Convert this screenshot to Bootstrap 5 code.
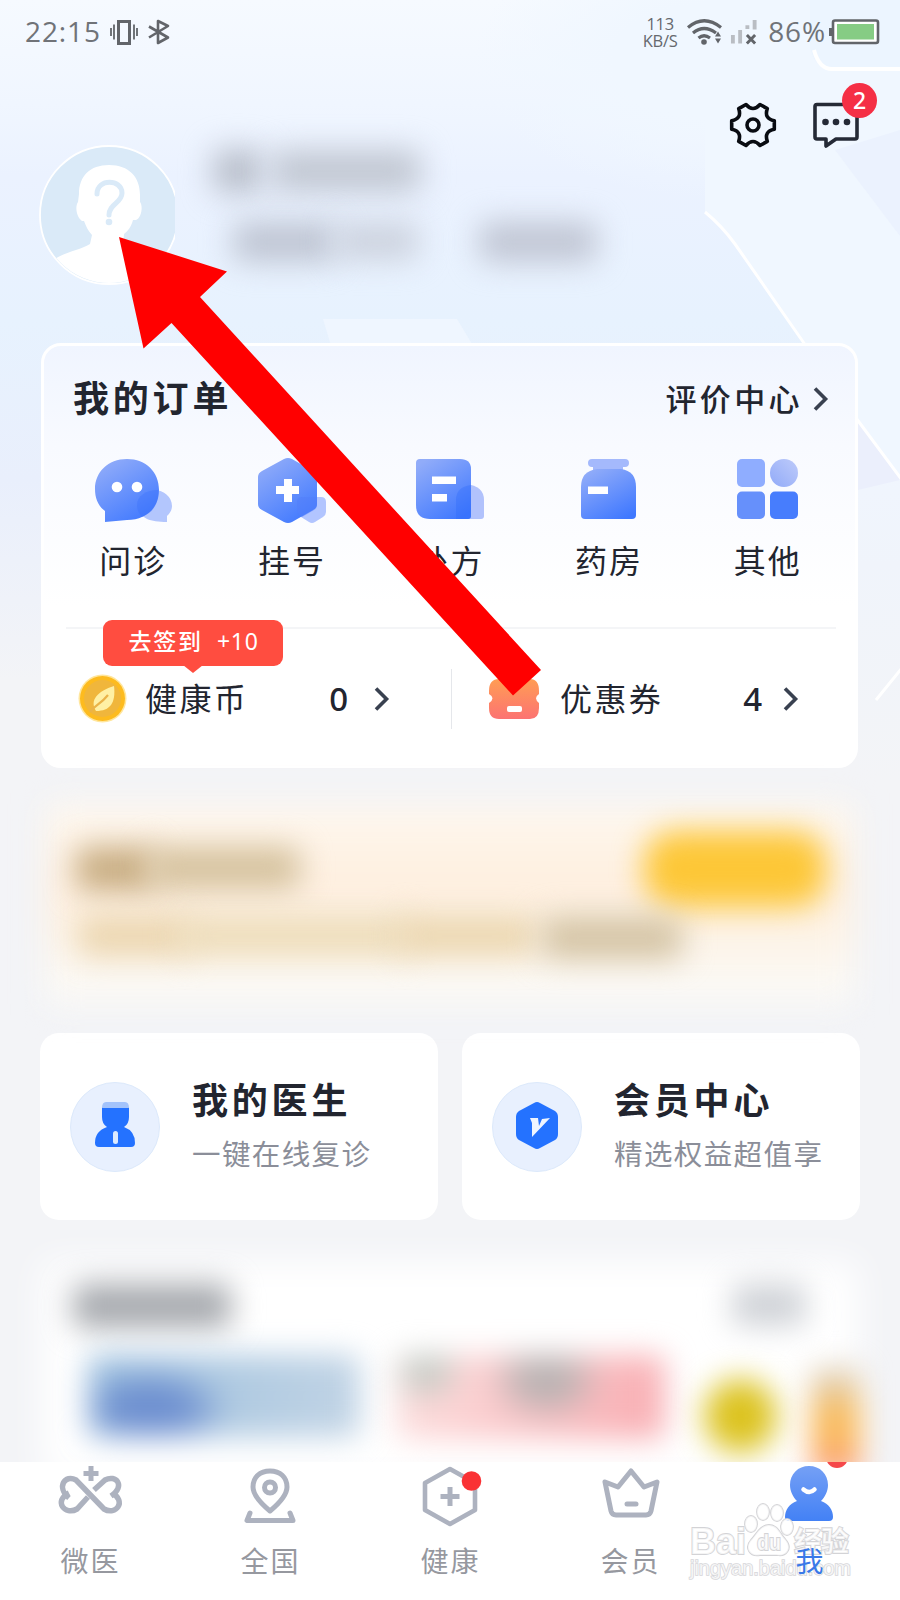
<!DOCTYPE html>
<html lang="zh-CN">
<head>
<meta charset="utf-8">
<meta name="viewport" content="width=device-width, initial-scale=1">
<title>我的</title>
<link href="https://cdn.jsdelivr.net/npm/bootstrap@5.3.0/dist/css/bootstrap.min.css" rel="stylesheet">
<style>
body{background:#f3f4f7;color:#22252f;font-family:"Noto Sans","Noto Sans CJK SC",sans-serif;overflow-x:hidden}
svg{display:block;flex:none;overflow:visible}
.screen{width:900px;height:1600px;overflow:hidden}
.backdrop{top:0;left:0;z-index:0}
.status{height:63px;padding:0 20px 0 25px;color:#707378;font-family:"Open Sans",sans-serif;font-size:28px;line-height:63px}
.clock{letter-spacing:.9px;width:84px}
.rate{font-size:16.5px;line-height:17px;text-align:center;width:36px;color:#66696e;letter-spacing:-.3px}
.rate div{height:17px}
.profile{height:280px;padding:32px 19px 0 39px}
.avatar{margin-top:49px}
.names{padding:54px 0 0 34px;width:500px}
.smudge{filter:blur(15px);border-radius:10px}
.tools{padding-top:6px;gap:35px}
.dot2{top:-18px;left:30px;width:35px;height:35px;background:#f52f45;color:#fff;font-size:23px;line-height:34px;font-weight:500;text-align:center}
.orders{margin:0 42px 0 41px;height:425px;border:3px solid #fff;border-radius:20px;background:linear-gradient(#f0f5ff 0,#f8faff 100px,#fff 260px)}
.big-title{font-size:36px;line-height:40px;font-weight:700;letter-spacing:3.8px}
.orders-head{padding:33px 26px 0 29px;height:107px}
.review{font-size:31px;line-height:40px;letter-spacing:3.4px;font-weight:500}
.kinds{padding:0 8px 0 10px;height:174px}
.kinds span{font-size:32px;line-height:40px;letter-spacing:2px;margin-top:16px}
.assets{margin:0 19px 0 22px;border-top:2px solid #f4f5f7;height:140px;padding-top:40px}
.asset{height:60px;font-size:32px;letter-spacing:2.4px}
.asset b{font-family:"Noto Sans";font-size:33px;font-weight:500;letter-spacing:0}
.asset+.asset{border-left:1px solid #e5e7eb}
.bubble{left:36.5px;top:-9px;width:180px;height:46px;background:#ff4d40;color:#fff;border-radius:9px;font-size:23px;line-height:43px;letter-spacing:1.8px;padding-left:26px;font-weight:500}
.bubble i{font-style:normal;font-weight:400;margin-left:14px;letter-spacing:.8px}
.bubble svg{left:80px;top:45px}
.promo{height:265px;padding:28px 40px 0}
.promo-in{height:222px}
.promo-bg{inset:8px 6px 14px 6px;background:linear-gradient(#fef8ef,#feefdf 40%,#fdf2e4 62%,#fbf9f5 90%);filter:blur(16px)}
.duo{padding:0 40px;gap:24px;height:187px}
.tile{border-radius:19px;background:#fff;padding:49px 0 0 30px;width:398px}
.disc{width:90px;height:90px;background:#e8f0fe;border:1px solid #dce9fb}
.tile-text{padding-left:32px;margin-top:-1px}
.sub{font-size:28.5px;line-height:36px;color:#8b8e99;letter-spacing:1.4px;margin-top:15px;white-space:nowrap}
.recent{height:242px;padding:30px 40px 0;overflow:hidden}
.recent-bg{inset:42px 42px -20px;background:#fff;filter:blur(18px)}
.tabs{height:138px;background:#fff;z-index:2}
.tab-cell{width:180px;height:138px;font-size:28px;color:#96989f;letter-spacing:2px}
.tab-cell svg{height:70px;margin:4px 0 0 2px}
.tab-cell span{line-height:34px;margin:8px 0 0 1px;z-index:3;position:relative}
.tab-cell.now{color:#3a79e8}
.tab-cell.now svg{margin-left:0}
.pip{width:22px;height:22px;background:#f5484a;left:826px;top:-16px}
.tabs-clip{top:0;left:0;width:900px;height:20px;overflow:hidden}
.stamp{right:45px;top:38px;z-index:2}
.pointer{left:0;top:0;z-index:5;pointer-events:none}
</style>
</head>
<body>
<main class="screen position-relative">
<svg class="backdrop position-absolute" width="900" height="800" viewBox="0 0 900 800">
<defs>
<linearGradient id="sky" x2="0" y2="1"><stop offset="0" stop-color="#f6faff"/><stop offset=".13" stop-color="#f0f6ff"/><stop offset=".22" stop-color="#ebf2ff"/><stop offset=".4" stop-color="#e7f2fe"/><stop offset=".6" stop-color="#e9effc"/><stop offset=".85" stop-color="#f3f4f7"/></linearGradient>
<linearGradient id="veil" x2="0" y2="1"><stop offset="0" stop-color="#f0f6ff"/><stop offset=".4" stop-color="#f0f4fb"/><stop offset="1" stop-color="#f3f4f7"/></linearGradient>
<radialGradient id="haze" gradientUnits="userSpaceOnUse" cx="705" cy="60" r="230" gradientTransform="translate(0 24) scale(1 .6)"><stop stop-color="#f0f7ff"/><stop offset=".4" stop-color="#f0f7ff"/><stop offset="1" stop-color="#f0f7ff" stop-opacity="0"/></radialGradient>
</defs>
<path fill="url(#sky)" d="M0 0h900v800H0z"/>
<path fill="url(#haze)" d="M460 0H705V212H460z"/>
<path fill="#f0f7ff" d="M705 0H900V480L803 343L735 246Q722 226 705 212z"/>
<path fill="#ebf2fe" d="M835 150L900 236V130z"/>
<path fill="#eff6ff" d="M323 319h134l18 30H332z"/>
<path fill="url(#veil)" d="M858 420L900 478V780H858z"/>
<path fill="#ebeffc" d="M858 422L900 480L858 490z"/>
<path fill="#ecf5ff" d="M810 0h90v69h-72q-11 0-18-20z"/>
<g fill="none" stroke="#fff" stroke-width="4"><path d="M814 50q5 19 18 19h68"/><path stroke-width="3" d="M705 212Q722 226 735 244L806 346M856 418L902 480M876 700L902 668"/></g>
</svg>

<div class="status position-relative d-flex align-items-center">
<span class="clock">22:15</span>
<svg width="60" height="28" viewBox="0 0 60 28" fill="none" stroke="#62656a"><path stroke-width="3" d="M9.500 3.500h11v22h-11z"/><path stroke-width="1.800" d="M2 10v8M5 6.500v15M25 6.500v15M28 10v8"/><path stroke-width="2.600" stroke-linejoin="round" d="M40 8.500L59 19.500L49 25V3L59 8L40 19.500"/></svg>
<div class="rate ms-auto"><div>113</div><div>KB/S</div></div>
<svg style="margin-left:8px" width="36" height="28" viewBox="0 0 36 28" fill="none" stroke="#62656a" stroke-width="3.200"><path d="M2 9.500Q18-4 35 9.500M7 15Q18 6 30 15M12.500 20Q18 15.500 24 20"/><circle cx="18" cy="24" r="2.800" fill="#62656a" stroke="none"/><path fill="#62656a" stroke="none" d="M29 18.500l3-5 3 5zM29 20.500h6l-3 5z"/></svg>
<svg style="margin-left:8px" width="28" height="28" viewBox="0 0 29 28"><path fill="#b9bdc3" d="M1 17h4v9H1zM8.500 12h4v14h-4zM16 7h4v4h-4zM23.500 1.500h4v10h-4z"/><path stroke="#62656a" stroke-width="3" d="M17.500 17l8.500 9M26 17l-8.500 9"/></svg>
<span style="margin-left:10px;letter-spacing:.9px">86%</span>
<svg style="margin-left:3px" width="51" height="26" viewBox="0 0 51 26"><rect x="4" y="1.500" width="45" height="22.500" rx="2" fill="#fff" stroke="#62656a" stroke-width="2.600"/><path fill="#62656a" d="M0 9h4v8H0z"/><path fill="#86cc84" d="M8 5h37v15.500H8z"/></svg>
</div>

<header class="profile position-relative d-flex align-items-start">
<svg class="avatar" width="140" height="142" viewBox="0 0 140 142"><defs><clipPath id="round"><circle cx="70" cy="71" r="68"/></clipPath><clipPath id="edge"><path d="M0 0h136v142H0z"/></clipPath></defs><g clip-path="url(#edge)"><circle cx="70" cy="71" r="69" fill="#daeaf8"/><g clip-path="url(#round)" fill="#fff"><path d="M70 21c20 0 31 12 31 30v7c3 3 2 16-4 18h-3c-2 7-5 11-9 14l-1 13c15 8 31 8 38 17l-15 35H18L14 116c12-8 27-10 37-16l2-9c-4-4-6-9-8-14h-2c-6-4-7-15-4-19l1-8c0-18 11-29 30-29z"/></g><path d="M58 50c0-16 25-15 25-1 0 10-13 11-13 22" fill="none" stroke="#daeaf8" stroke-width="5" stroke-linecap="round"/><circle cx="70" cy="78" r="3.300" fill="#daeaf8"/><circle cx="70" cy="71" r="69" fill="none" stroke="#fff" stroke-width="1.800"/></g></svg>
<div class="names">
<div class="d-flex"><div class="smudge" style="width:50px;height:44px;background:#b9bfcb"></div><div class="smudge" style="width:150px;height:42px;margin:1px 0 0 8px;background:#c1c7d2"></div></div>
<div class="d-flex" style="margin-top:29px"><div class="smudge" style="width:104px;height:40px;margin-left:20px;background:#bec4d2"></div><div class="smudge" style="width:84px;height:38px;margin-left:-2px;background:#ccd2de"></div><div class="smudge" style="width:118px;height:40px;margin-left:60px;background:#c0c5d3"></div></div>
</div>
<div class="tools d-flex ms-auto">
<svg width="48" height="48" viewBox="-24 -24 48 48" fill="none" stroke="#090c12" stroke-width="3.600" stroke-linejoin="round"><path d="M-7-20.500Q0-12.500 7-20.500L14.300-16.400Q10.800-6.250 21.300-4.300V4.300Q10.800 6.250 14.300 16.400L7 20.500Q0 12.500-7 20.500L-14.300 16.400Q-10.800 6.250-21.300 4.300V-4.300Q-10.800-6.250-14.300-16.400z"/><circle r="6"/></svg>
<div class="position-relative"><svg width="69" height="50" viewBox="0 0 69 50"><path d="M5 3.500h38q2 0 2 2V36q0 2-2 2H24l-10 7v-7H5q-2 0-2-2V5.500q0-2 2-2z" fill="none" stroke="#252a36" stroke-width="3.600" stroke-linejoin="round"/><g fill="#252a36"><circle cx="13.500" cy="21" r="3.300"/><circle cx="24" cy="21" r="3.300"/><circle cx="35" cy="21" r="3.300"/></g></svg><span class="dot2 position-absolute rounded-circle">2</span></div>
</div>
</header>

<section class="orders position-relative">
<div class="orders-head d-flex justify-content-between align-items-start">
<div class="big-title">我的订单</div>
<div class="review d-flex align-items-center">评价中心<svg style="margin-left:9px" width="17" height="26" viewBox="0 0 17 26" fill="none" stroke="#394150" stroke-width="3.600"><path d="M3 2.500l10.500 10.500L3 23.500"/></svg></div>
</div>
<svg width="0" height="0" class="position-absolute"><defs><linearGradient id="blue" x1=".2" y1="0" x2=".8" y2="1"><stop offset="0" stop-color="#91acf9"/><stop offset="1" stop-color="#3f78ff"/></linearGradient><linearGradient id="pale" x1="1" x2="0" y2="1"><stop offset="0" stop-color="#becbfa"/><stop offset="1" stop-color="#91aaf8"/></linearGradient></defs></svg>
<div class="kinds row g-0">
<div class="col d-flex flex-column align-items-center"><svg width="80" height="72" viewBox="0 0 80 72"><path fill="#b3c6fd" d="M61 37c10 0 18 7 18 16 0 4-2 7-5 10v6c-18 0-28-4-28-16 0-9 6-16 15-16z"/><path fill="url(#blue)" d="M34 6c19 0 32 13 32 31S53 67 34 67l-22 2V58C5 53 2 45 2 36 2 19 15 6 34 6z"/><path fill="#3971fa" opacity=".35" d="M65 37c-12 0-21 6-21 15 0 5 2 9 5 12 10-4 17-12 16-27z"/><circle cx="24" cy="34" r="5.300" fill="#fff"/><circle cx="44" cy="34" r="5.300" fill="#fff"/></svg><span>问诊</span></div>
<div class="col d-flex flex-column align-items-center"><svg width="74" height="72" viewBox="0 0 74 72"><path fill="#b2c5ff" d="M46 44h20q5 0 5 5v10q0 3-3 5l-8 5q-3 2-6 0l-8-5z"/><path fill="url(#blue)" d="M29 6q4-2 8 0l21 12q4 2 4 6v27q0 4-4 6L37 69q-4 2-8 0L7 57q-4-2-4-6V24q0-4 4-6z"/><path fill="#fff" d="M29 26h8v7h7v8h-7v8h-8v-8h-8v-8h8z"/><path fill="#517efa" opacity=".5" d="M42 49q0-5 5-5h15v8q0 3-3 5l-12 7q-5-3-5-7z"/></svg><span>挂号</span></div>
<div class="col d-flex flex-column align-items-center"><svg width="86" height="72" viewBox="0 0 86 72"><g transform="translate(1)"><path fill="#b1c2fc" d="M58 31q18 2 18 16v16q0 3-3 3H58z"/><path fill="url(#blue)" d="M12 6h40q11 0 11 10v47q0 3-3 3H22Q8 66 8 52V10q0-4 4-4z"/><path fill="#2f69fa" opacity=".35" d="M63 32q-15 2-15 15v19h12q3 0 3-3z"/><path fill="#fff" d="M24 23.500h24v7.500H24zM24 41h15v7.500H24z"/></g></svg><span>处方</span></div>
<div class="col d-flex flex-column align-items-center"><svg width="60" height="72" viewBox="0 0 60 72"><path fill="#a4b9fc" d="M13 6h33q4 0 4 4t-4 4h-2v7H14v-7h-1q-4 0-4-4t4-4z"/><path fill="url(#blue)" d="M18 16h24q15 2 15 18v28q0 4-4 4H6q-4 0-4-4V34q0-16 16-18z"/><path fill="#fff" d="M9 33.500h20V41H9z"/></svg><span>药房</span></div>
<div class="col d-flex flex-column align-items-center"><svg width="62" height="72" viewBox="0 0 62 72"><rect x="0" y="6" width="28" height="28" rx="5" fill="#8fadff"/><circle cx="47" cy="20" r="14" fill="url(#pale)"/><rect x="0" y="38.500" width="28" height="27.500" rx="5" fill="#6690fb"/><rect x="33" y="38.500" width="28" height="27.500" rx="5" fill="#477dfd"/></svg><span>其他</span></div>
</div>
<div class="assets d-flex position-relative">
<div class="asset d-flex align-items-center" style="width:385px;padding-left:11px"><svg width="50" height="50" viewBox="0 0 50 50"><circle cx="25.500" cy="24.500" r="24" fill="#ffe69d"/><circle cx="25.500" cy="24.500" r="22.500" fill="#fdbb1f"/><circle cx="25.500" cy="24.500" r="18.500" fill="#f0b63c"/><path fill="#fff0a4" d="M37 12c2 17-4 25-18 25-7-11 2-20 18-25z"/><path d="M13 38c5-7 10-7 18-17" fill="none" stroke="#eab349" stroke-width="2.200"/></svg><span style="margin-left:18px">健康币</span><b style="margin-left:81px">0</b><svg style="margin-left:25px" width="17" height="26" viewBox="0 0 17 26" fill="none" stroke="#394150" stroke-width="3.600"><path d="M3 2.500l10.500 10.500L3 23.500"/></svg></div>
<div class="asset d-flex align-items-center flex-fill" style="padding-left:37px"><svg width="51" height="42" viewBox="0 0 51 42"><defs><linearGradient id="tick" x2="0" y2="1"><stop stop-color="#ff9d54"/><stop offset="1" stop-color="#fc7372"/></linearGradient></defs><path fill="url(#tick)" d="M10 1h31q9 0 9 12v3q-6 4 0 9v5q0 11-9 11H10Q0 41 0 30v-5q7-5 0-9v-3Q0 1 10 1z"/><rect x="18" y="28" width="15" height="6" rx="2" fill="#fff"/></svg><span style="margin-left:20px">优惠券</span><b style="margin-left:80px">4</b><svg style="margin-left:20px" width="17" height="26" viewBox="0 0 17 26" fill="none" stroke="#394150" stroke-width="3.600"><path d="M3 2.500l10.500 10.500L3 23.500"/></svg></div>
<div class="bubble position-absolute">去签到<i>+10</i><svg class="position-absolute" width="20" height="8"><path fill="#ff4d40" d="M0 0h20l-10 8z"/></svg></div>
</div>
</section>

<section class="promo position-relative">
<div class="promo-in position-relative">
<div class="promo-bg position-absolute"></div>
<div class="position-relative d-flex" style="padding:51px 34px 0 36px"><div class="smudge" style="width:80px;height:44px;background:#c8ad82"></div><div class="smudge" style="width:152px;height:42px;margin-left:-8px;background:#d5c29e"></div><div class="smudge ms-auto" style="width:182px;height:76px;margin-top:-16px;border-radius:32px;background:#fdc737"></div></div>
<div class="position-relative d-flex" style="padding:10px 0 0 38px"><div class="smudge" style="width:114px;height:38px;background:#ebd5ae"></div><div class="smudge" style="width:234px;height:38px;margin-left:-14px;background:#eddcb9"></div><div class="smudge" style="width:138px;height:38px;margin-left:-14px;background:#ebd6af"></div><div class="smudge" style="width:140px;height:42px;margin-left:6px;background:#d4c4a5"></div></div>
</div>
</section>

<section class="duo d-flex">
<div class="tile d-flex align-items-start"><div class="disc rounded-circle d-flex align-items-center justify-content-center"><svg width="42" height="48" viewBox="0 0 42 48" style="margin-top:-6px"><path fill="#2472ff" d="M8 7h27v10q0 7-5 10 11 4 11 16 0 4-4 4H5q-4 0-4-4 0-12 12-16-5-3-5-10z"/><path fill="#a3c3fb" d="M12 2h19q4 0 4 6H8q0-6 4-6z"/><rect x="19" y="31" width="5" height="13" rx="2.500" fill="#dceaff"/></svg></div><div class="tile-text"><div class="big-title">我的医生</div><div class="sub">一键在线复诊</div></div></div>
<div class="tile d-flex align-items-start"><div class="disc rounded-circle d-flex align-items-center justify-content-center"><svg width="44" height="48" viewBox="0 0 44 48" style="margin-top:-5px"><path fill="#2472ff" d="M19 2q3-2 6 0l15 8q3 2 3 6v17q0 4-3 6l-15 8q-3 2-6 0L4 39q-3-2-3-6V16q0-4 3-6z"/><path fill="#eff5ff" d="M15 17h8l1 8 3-7 8-1-18 19v-14z"/></svg></div><div class="tile-text"><div class="big-title">会员中心</div><div class="sub">精选权益超值享</div></div></div>
</section>

<section class="recent position-relative">
<div class="recent-bg position-absolute"></div>
<div class="position-relative d-flex justify-content-between" style="padding:34px 54px 0 33px"><div class="smudge" style="width:158px;height:44px;background:#a6a9ae"></div><div class="smudge" style="width:74px;height:42px;background:#cfd2d7"></div></div>
<div class="position-relative d-flex" style="padding:27px 0 0 48px"><div class="smudge" style="width:276px;height:82px;background:radial-gradient(ellipse 80px 42px at 62px 54px,#6d8fd0 45%,transparent),linear-gradient(100deg,#9cc0de,#c2d4e5)"></div><div class="smudge" style="width:272px;height:84px;margin-left:36px;background:radial-gradient(ellipse 60px 44px at 150px 24px,#b8b2b2 35%,transparent),radial-gradient(ellipse 40px 36px at 30px 14px,#c5cbc5 35%,transparent),linear-gradient(100deg,#fce0df,#fbc3c6 55%,#f8adb2)"></div><div class="smudge rounded-circle" style="width:74px;height:74px;margin:24px 0 0 39px;background:#dcc31f"></div><div class="smudge" style="width:50px;height:110px;margin:12px 0 0 34px;background:linear-gradient(#dad6cf,#f9b955 45%,#fab75e 70%,#fa8c7c)"></div></div>
</section>

<nav class="tabs position-relative d-flex">
<div class="tabs-clip position-absolute"><span class="pip position-absolute rounded-circle"></span></div>
<div class="tab-cell d-flex flex-column align-items-center"><svg width="66" height="70" viewBox="0 0 66 70"><g fill="none" stroke="#adb2bf" stroke-width="5.500"><path d="M11 32C-2 21 7 8 18 14L46 43C58 50 69 35 54 27"/><path d="M53 30C68 20 58 8 47 14L36 24M30 31L19 43C7 50-5 35 11 27"/></g><path fill="#adb2bf" d="M30.500 0h5v5h5v5h-5v5h-5v-5h-5V5h5z"/></svg><span>微医</span></div>
<div class="tab-cell d-flex flex-column align-items-center"><svg width="52" height="70" viewBox="0 0 52 70" style="margin-left:0" fill="none" stroke="#adb2bf" stroke-width="5" stroke-linejoin="round"><path d="M26 45C14 35 9 28 9 21C9 11 16 5 26 5s17 6 17 16c0 7-5 14-17 24z"/><circle cx="26" cy="21.500" r="5.500"/><path stroke-linecap="round" d="M6 47l-3 7.500h46l-3-7.500"/></svg><span>全国</span></div>
<div class="tab-cell d-flex flex-column align-items-center"><svg width="58" height="70" viewBox="0 0 58 70" style="margin-left:0"><path fill="none" stroke="#adb2bf" stroke-width="4.600" stroke-linejoin="round" d="M29 3L54 17v27L29 58 4 44V17z"/><path fill="#adb2bf" d="M26.500 21h5v7h7v5h-7v7h-5v-7h-7v-5h7z"/><circle cx="50.500" cy="15" r="9.800" fill="#fa3235"/></svg><span>健康</span></div>
<div class="tab-cell d-flex flex-column align-items-center"><svg width="60" height="70" viewBox="0 0 60 70" fill="none" stroke="#adb2bf" stroke-width="5" stroke-linejoin="round"><path d="M4 16l13 5L30 5l13 16 13-5-6 29q-1 4-5 4H15q-4 0-5-4z"/><path stroke-linecap="round" d="M26 38h9"/></svg><span>会员</span></div>
<div class="tab-cell now d-flex flex-column align-items-center"><svg width="50" height="70" viewBox="0 0 50 70"><path fill="url(#person)" d="M24 0c11 0 19 8 19 19 0 6-3 12-7 16 8 3 12 9 12 16q0 4-4 4H4q-4 0-4-4c0-7 4-13 12-16-4-4-7-10-7-16C5 8 13 0 24 0z"/><defs><linearGradient id="person" x2="0" y2="1"><stop stop-color="#75a0f5"/><stop offset="1" stop-color="#4381f5"/></linearGradient></defs><path d="M18.500 23.500q6 5 11 0" fill="none" stroke="#fff" stroke-width="4.500" stroke-linecap="round"/></svg><span>我</span></div>
<svg class="stamp position-absolute" width="170" height="84" viewBox="685 1500 170 84"><g fill="#fff" fill-opacity=".75" stroke="#d3d3d6" stroke-width="1.800" paint-order="stroke" font-family="Liberation Sans, sans-serif"><ellipse cx="751" cy="1524" rx="6" ry="8"/><ellipse cx="763" cy="1512" rx="6" ry="8"/><ellipse cx="777" cy="1513" rx="6" ry="8"/><ellipse cx="787" cy="1527" rx="6" ry="8"/><path d="M769 1525c9 0 11 9 16 14 9 10 0 18-8 16h-17c-10 2-16-7-9-15 5-5 9-15 18-15z"/><text x="690" y="1554" font-size="37" font-weight="700" textLength="56" lengthAdjust="spacingAndGlyphs">Bai</text><text x="757" y="1550" font-size="22" font-weight="700" textLength="24" lengthAdjust="spacingAndGlyphs">du</text><text x="794" y="1552" font-size="28" font-weight="700" font-family="Noto Sans CJK SC, sans-serif" textLength="55">经验</text><text x="690" y="1575" font-size="20" textLength="161" lengthAdjust="spacingAndGlyphs" stroke="#d6d6d9" stroke-width="1.500">jingyan.baidu.com</text></g></svg>
</nav>

<svg class="pointer position-absolute" width="560" height="720" viewBox="0 0 560 720"><path fill="#f00" d="M119 237L227 271.500 200 297 541 670 513 695.500 171.500 323 143.500 348.500z"/></svg>
</main>
<script src="https://cdn.jsdelivr.net/npm/bootstrap@5.3.0/dist/js/bootstrap.bundle.min.js"></script>
</body>
</html>
